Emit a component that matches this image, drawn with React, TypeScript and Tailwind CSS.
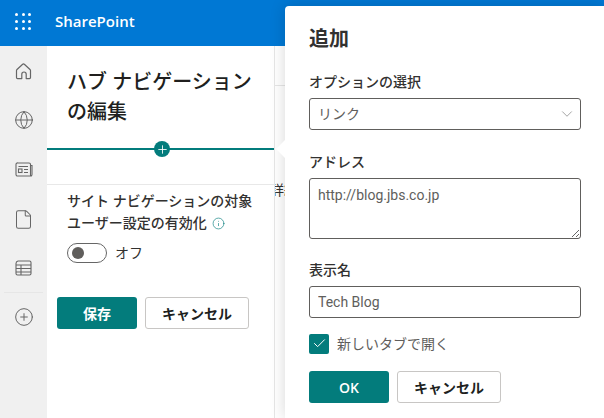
import { Check, ChevronDown, CirclePlus, File, Globe, Info, Plus } from 'lucide-react'

const FONT = "font-['Open_Sans','Noto_Sans_CJK_JP',sans-serif]"

function WaffleIcon() {
  const dots = [0, 1, 2, 3, 4, 5, 6, 7, 8]
  return (
    <div className="grid w-[16px] grid-cols-3 gap-[4px]">
      {dots.map(d => (
        <span key={d} className="h-[3px] w-[3px] rounded-full bg-white" />
      ))}
    </div>
  )
}

function HomeIcon() {
  return (
    <svg width="17" height="17" viewBox="0 0 17 17" fill="none" stroke="#666" strokeWidth="1.2" strokeLinejoin="round">
      <path d="M7.4 1.5a1.6 1.6 0 0 1 2.2 0l5.4 5a1.5 1.5 0 0 1 .5 1.1v7a1 1 0 0 1-1 1h-3.3v-4.4a2.2 2.2 0 0 0-4.4 0v4.4H2.5a1 1 0 0 1-1-1v-7a1.5 1.5 0 0 1 .5-1.1z" />
    </svg>
  )
}

function NewsIcon() {
  return (
    <svg width="18" height="15" viewBox="0 0 18 15" fill="none" stroke="#666" strokeWidth="1.1">
      <path d="M3 1h11a1.5 1.5 0 0 1 1.5 1.5V13a1 1 0 0 0 1 1H2.5A1.5 1.5 0 0 1 1 12.5v-10A1.5 1.5 0 0 1 3 1z" />
      <path d="M15.5 3.5H17v9a1.5 1.5 0 0 1-1 1.4" />
      <rect x="3.5" y="7" width="3.5" height="3.5" />
      <path d="M9 7.5h4M9 10.5h4M3.5 4.5h9.5" />
    </svg>
  )
}

function TableIcon() {
  return (
    <svg width="17" height="16" viewBox="0 0 17 16" fill="none" stroke="#666" strokeWidth="1.1">
      <path d="M3 1h11.5a1.5 1.5 0 0 1 1.5 1.5v11a1.5 1.5 0 0 1-1.5 1.5H2.5A1.5 1.5 0 0 1 1 13.5v-10A2.5 2.5 0 0 1 3 1z" />
      <path d="M1 5h15M1 8.5h15M1 12h15M6 5v10" />
    </svg>
  )
}

function Rail() {
  return (
    <aside className="flex w-[47px] shrink-0 flex-col items-center bg-[#f0f0f0] pt-[15px] text-[#666]">
      <div className="flex h-[20px] items-center"><HomeIcon /></div>
      <div className="mt-[29px] flex h-[20px] items-center"><Globe size={20} strokeWidth={1.2} /></div>
      <div className="mt-[29px] flex h-[20px] items-center"><NewsIcon /></div>
      <div className="mt-[30px] flex h-[20px] items-center"><File size={21} strokeWidth={1.15} /></div>
      <div className="mt-[29px] flex h-[20px] items-center"><TableIcon /></div>
      <div className="mt-[14px] h-px w-[39px] bg-[#e6e6e6]" />
      <div className="mt-[14px] flex h-[20px] items-center"><CirclePlus size={20} strokeWidth={1.2} /></div>
    </aside>
  )
}

function HubPanel() {
  return (
    <section className="flex w-[228px] shrink-0 flex-col border-r border-[#e6e6e6] bg-white">
      <h1 className="mt-[21px] pl-[20px] pr-[10px] text-[20px] leading-[30px] font-medium text-[#201f1e]">
        ハブ ナビゲーション<br />の編集
      </h1>
      <div className="relative mt-[21px] h-[2px] bg-[#037c7c]">
        <span className="absolute left-[107px] top-[-7px] flex h-[16px] w-[16px] items-center justify-center rounded-full bg-[#037c7c] text-white">
          <Plus size={13} strokeWidth={1.6} />
        </span>
      </div>
      <div className="mt-[34px] h-px bg-[#e8e8e8]" />
      <div className="mt-[5px] pl-[20px] text-[14px] leading-[22px] font-medium text-[#323130]">
        <p>サイト ナビゲーションの対象</p>
        <p className="flex items-center gap-[5px]">
          ユーザー設定の有効化
          <Info size={13} strokeWidth={1.2} className="text-[#037c7c]" />
        </p>
      </div>
      <div className="mt-[8px] flex items-center gap-[8px] pl-[20px]">
        <div className="flex h-[20px] w-[40px] items-center rounded-full border border-[#666] pl-[4px]">
          <span className="h-[12px] w-[12px] rounded-full bg-[#605e5c]" />
        </div>
        <span className="text-[14px] text-[#323130]">オフ</span>
      </div>
      <div className="mt-[34px] flex gap-[8px] pl-[10px]">
        <button className="h-[32px] w-[80px] rounded-[3px] bg-[#037c7c] text-[14px] font-semibold text-white">保存</button>
        <button className="h-[32px] w-[104px] rounded-[3px] border border-[#c8c6c4] bg-white text-[14px] font-semibold text-[#201f1e]">キャンセル</button>
      </div>
    </section>
  )
}

function Field({ label, children, className }: { label: string; children: React.ReactNode; className: string }) {
  return (
    <div className={className}>
      <label className="block text-[14px] leading-[20px] font-medium text-[#323130]">{label}</label>
      <div className="mt-[6px]">{children}</div>
    </div>
  )
}

function AddPanel() {
  return (
    <div className="absolute bottom-0 left-[285px] right-0 top-[6px] rounded-tl-[4px] bg-white pl-[24px] pr-[23px] pt-[19px] shadow-[0_0_16px_rgba(0,0,0,0.16)]">
      <span className="absolute left-[-6px] top-[136px] h-[14px] w-[14px] rotate-45 bg-white" />
      <h2 className="relative text-[20px] leading-[28px] font-semibold text-[#323130]">追加</h2>
      <Field label="オプションの選択" className="mt-[19px]">
        <div className="flex h-[32px] items-center justify-between rounded-[3px] border border-[#605e5c] pl-[8px] pr-[4px] text-[14px] text-[#605e5c]">
          <span className="pb-[2px]">リンク</span>
          <ChevronDown size={18} strokeWidth={0.9} className="text-[#777]" />
        </div>
      </Field>
      <Field label="アドレス" className="mt-[22px]">
        <textarea
          readOnly
          defaultValue="http://blog.jbs.co.jp"
          className="block h-[61px] w-full rounded-[3px] border border-[#605e5c] px-[8px] py-[6px] font-['Roboto',sans-serif] text-[14px] leading-[20px] text-[#605e5c]"
        />
      </Field>
      <Field label="表示名" className="mt-[21px]">
        <input
          readOnly
          value="Tech Blog"
          className="block h-[32px] w-full rounded-[3px] border border-[#605e5c] px-[8px] font-['Roboto',sans-serif] text-[14px] text-[#605e5c]"
        />
      </Field>
      <div className="mt-[15px] flex items-center gap-[8px]">
        <span className="flex h-[20px] w-[20px] items-center justify-center rounded-[2px] bg-[#037c7c] text-white">
          <Check size={15} strokeWidth={1.6} />
        </span>
        <span className="text-[14px] text-[#605e5c]">新しいタブで開く</span>
      </div>
      <div className="mt-[17px] flex gap-[8px]">
        <button className="h-[32px] w-[80px] rounded-[3px] bg-[#037c7c] text-[14px] font-semibold text-white">OK</button>
        <button className="h-[32px] w-[104px] rounded-[3px] border border-[#c8c6c4] bg-white text-[14px] font-semibold text-[#201f1e]">キャンセル</button>
      </div>
    </div>
  )
}

export default function App() {
  return (
    <div className={`relative flex h-[418px] w-[604px] flex-col overflow-hidden bg-white ${FONT}`}>
      <header className="flex h-[46px] shrink-0 items-center bg-[#0078d4] pb-[3px] pl-[15px] text-white">
        <WaffleIcon />
        <span className="ml-[24px] text-[15px] font-semibold">SharePoint</span>
      </header>
      <div className="flex flex-1">
        <Rail />
        <HubPanel />
        <div className="flex-1 overflow-hidden">
          <div className="mt-[39px] h-px bg-[#e6e6e6]" />
          <p className="-ml-[5px] mt-[94px] whitespace-nowrap text-[14px] leading-[20px] text-[#323130]">詳細</p>
        </div>
      </div>
      <AddPanel />
    </div>
  )
}
